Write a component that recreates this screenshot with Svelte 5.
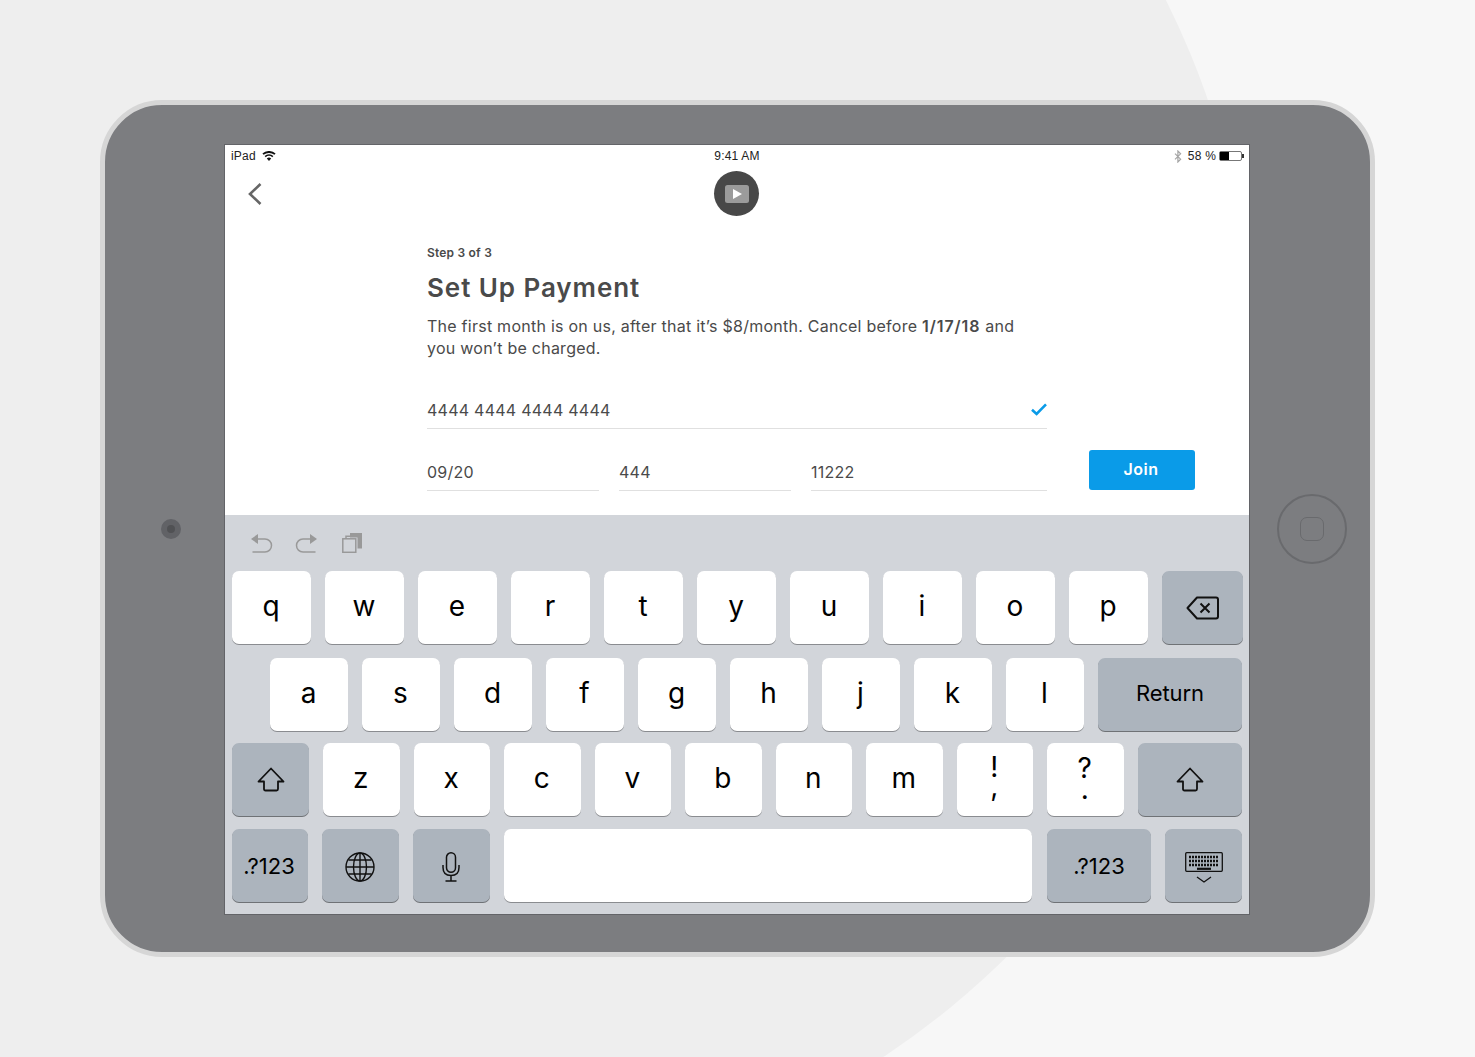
<script>
	const row1 = ['q', 'w', 'e', 'r', 't', 'y', 'u', 'i', 'o', 'p'];
	const row2 = ['a', 's', 'd', 'f', 'g', 'h', 'j', 'k', 'l'];
	const row3 = ['z', 'x', 'c', 'v', 'b', 'n', 'm'];
</script>

{#snippet shift()}
	<svg width="28" height="25" viewBox="0 0 28 25" fill="none" stroke="#111" stroke-width="1.8" stroke-linejoin="round">
		<path d="M14 1.5 L26.5 14.5 H21 V22 Q21 23.5 19.5 23.5 H8.5 Q7 23.5 7 22 V14.5 H1.5 Z" />
	</svg>
{/snippet}

<div class="page">
	<div class="blob"></div>
	<div class="device">
		<div class="side left">
			<div class="camera"><span></span></div>
		</div>

		<div class="screen">
			<div class="app">
				<div class="status">
					<div class="status-left">
						iPad
						<svg width="14" height="10" viewBox="0 0 14 10">
							<path d="M7 10 L4.8 7.4 A3.4 3.4 0 0 1 9.2 7.4 Z M3.7 6.2 L2.6 4.9 A6.8 6.8 0 0 1 11.4 4.9 L10.3 6.2 A5.2 5.2 0 0 0 3.7 6.2 Z M1.6 3.8 L.4 2.4 A10.2 10.2 0 0 1 13.6 2.4 L12.4 3.8 A8.6 8.6 0 0 0 1.6 3.8 Z" fill="#111" />
						</svg>
					</div>
					<div class="status-mid">9:41 AM</div>
					<div class="status-right">
						<svg width="8" height="13" viewBox="0 0 8 13" fill="none" stroke="#a5a5a5" stroke-width="1.2">
							<path d="M1 3.6 L6.6 9.2 L3.9 12 V1 L6.6 3.8 L1 9.4" />
						</svg>
						<span>58 %</span>
						<div class="battery"><i></i></div>
					</div>
				</div>

				<div class="header">
					<svg class="back" width="14" height="22" viewBox="0 0 14 22" fill="none" stroke="#666" stroke-width="2.6">
						<path d="M12.5 1 L2 11 L12.5 21" />
					</svg>
					<div class="logo">
						<div class="logo-box"><i></i></div>
					</div>
				</div>

				<div class="content">
					<div class="step">Step 3 of 3</div>
					<h1>Set Up Payment</h1>
					<p>The first month is on us, after that it’s $8/month. Cancel before <b>1/17/18</b> and<br />you won’t be charged.</p>

					<div class="field card">
						<span>4444 4444 4444 4444</span>
						<svg width="16" height="13" viewBox="0 0 16 13" fill="none" stroke="#0a9be8" stroke-width="2.6">
							<path d="M1 6.8 L5.6 11 L15 1.4" />
						</svg>
					</div>

					<div class="form-row">
						<div class="field small">09/20</div>
						<div class="field small">444</div>
						<div class="field small zip">11222</div>
						<button class="join">Join</button>
					</div>
				</div>
			</div>

			<div class="keyboard">
				<div class="tools">
					<svg width="22" height="20" viewBox="0 0 22 20" fill="none" stroke="#999" stroke-width="1.5">
						<path d="M5 6 H14 A6.5 6.5 0 0 1 14 19 H1.5" />
						<path d="M0 6 L7 1 V11 Z" fill="#999" stroke="none" />
					</svg>
					<svg width="22" height="20" viewBox="0 0 22 20" fill="none" stroke="#999" stroke-width="1.5">
						<path d="M17 6 H8 A6.5 6.5 0 0 0 8 19 H20.5" />
						<path d="M22 6 L15 1 V11 Z" fill="#999" stroke="none" />
					</svg>
					<svg class="paste" width="20" height="20" viewBox="0 0 20 20" fill="none" stroke="#999" stroke-width="1.5">
						<rect x=".8" y="5.8" width="13" height="13.5" />
						<path d="M4 5.5 V3.2 H8" />
						<path d="M8 0 H20 V15.5 H15.5 V4.5 H8 Z" fill="#999" stroke="none" />
					</svg>
				</div>

				<div class="row r1">
					{#each row1 as k}
						<div class="key">{k}</div>
					{/each}
					<div class="key dark backspace">
						<svg width="34" height="24" viewBox="0 0 34 24" fill="none" stroke="#111" stroke-width="2" stroke-linejoin="round">
							<path d="M11 1.5 H30 Q32 1.5 32 3.5 V20.5 Q32 22.5 30 22.5 H11 L1.5 12 Z" />
							<path d="M14.5 7.5 L23.5 16.5 M23.5 7.5 L14.5 16.5" />
						</svg>
					</div>
				</div>

				<div class="row r2">
					{#each row2 as k}
						<div class="key">{k}</div>
					{/each}
					<div class="key dark return">Return</div>
				</div>

				<div class="row r3">
					<div class="key dark shift-l">{@render shift()}</div>
					{#each row3 as k}
						<div class="key">{k}</div>
					{/each}
					<div class="key double comma"><span>!</span><span>,</span></div>
					<div class="key double"><span>?</span><span>.</span></div>
					<div class="key dark shift-r">{@render shift()}</div>
				</div>

				<div class="row r4">
					<div class="key dark label first w76">.?123</div>
					<div class="key dark nudge w77">
						<svg width="30" height="30" viewBox="0 0 30 30" fill="none" stroke="#111" stroke-width="1.4">
							<circle cx="15" cy="15" r="14" />
							<ellipse cx="15" cy="15" rx="6.5" ry="14" />
							<path d="M15 1 V29 M1 15 H29 M3.4 8 H26.6 M3.4 22 H26.6" />
						</svg>
					</div>
					<div class="key dark nudge w77">
						<svg width="18" height="30" viewBox="0 0 18 30" fill="none" stroke="#111" stroke-width="1.5">
							<rect x="4.5" y=".8" width="9" height="19.5" rx="4.5" />
							<path d="M1 13 V15.5 Q1 23.5 9 23.5 Q17 23.5 17 15.5 V13 M9 23.5 V29 M3.5 29 H14.5" />
						</svg>
					</div>
					<div class="key space"></div>
					<div class="key dark label w104">.?123</div>
					<div class="key dark kbd w77">
						<svg width="38" height="32" viewBox="0 0 38 32" fill="none" stroke="#111">
							<rect x=".7" y=".7" width="36.6" height="18.6" rx="1" stroke-width="1.3" />
							<path d="M4 5 H34 M4 9 H34 M4 13 H34" stroke-width="2.4" stroke-dasharray="2 1" />
							<path d="M12 16.8 H26" stroke-width="2.2" />
							<path d="M12 25 L19 30 L26 25" stroke-width="1.3" />
						</svg>
					</div>
				</div>
			</div>
		</div>

		<div class="side right">
			<div class="home"><span></span></div>
		</div>
	</div>
</div>

<style>
	:global(body) {
		background: #f7f7f7;
		font-family: Inter, 'Liberation Sans', sans-serif;
	}

	.page {
		position: relative;
		height: 1057px;
		padding: 100px;
		box-sizing: border-box;
		overflow: hidden;
	}

	.blob {
		position: absolute;
		left: -397px;
		top: -456px;
		width: 1650px;
		height: 1650px;
		border-radius: 50%;
		background: #eee;
	}

	.device {
		position: relative;
		display: flex;
		height: 857px;
		box-sizing: border-box;
		border: 5px solid #d6d6d6;
		border-radius: 62px;
		background: #7c7d80;
	}

	.side {
		display: flex;
		align-items: center;
		box-sizing: border-box;
	}

	.left {
		flex: 0 0 120px;
		padding-left: 56px;
	}

	.right {
		flex: 0 0 121px;
		padding-left: 28px;
	}

	.camera {
		width: 20px;
		height: 20px;
		border-radius: 50%;
		background: #616266;
		display: flex;
		align-items: center;
		justify-content: center;
	}

	.camera span {
		width: 8px;
		height: 8px;
		border-radius: 50%;
		background: #505154;
	}

	.home {
		width: 70px;
		height: 70px;
		box-sizing: border-box;
		border: 2px solid #696a6d;
		border-radius: 50%;
		display: flex;
		align-items: center;
		justify-content: center;
	}

	.home span {
		width: 24px;
		height: 24px;
		box-sizing: border-box;
		border: 1.5px solid #696a6d;
		border-radius: 7px;
	}

	.screen {
		flex: 1;
		margin: 40px 0 38px;
		display: flex;
		flex-direction: column;
		background: #fff;
		box-shadow: 0 0 0 1px #636468;
	}

	.app {
		height: 370px;
		color: #4a4a4a;
	}

	.status {
		display: grid;
		grid-template-columns: 1fr auto 1fr;
		align-items: center;
		height: 22px;
		padding: 0 6px;
		font-family: 'Liberation Sans', sans-serif;
		font-size: 12px;
		letter-spacing: 0.2px;
		color: #222;
	}

	.status-left {
		display: flex;
		align-items: center;
		gap: 6px;
	}

	.status-right {
		display: flex;
		justify-content: flex-end;
		align-items: center;
		gap: 4px;
	}

	.status-right span {
		margin: 0 -1px 0 2px;
	}

	.battery {
		position: relative;
		width: 23px;
		height: 10px;
		box-sizing: border-box;
		border: 1px solid #777;
		border-radius: 2px;
		margin-right: 1px;
	}

	.battery i {
		display: block;
		width: 9px;
		height: 8px;
		background: #000;
	}

	.battery::after {
		content: '';
		position: absolute;
		right: -3px;
		top: 2px;
		width: 2px;
		height: 4px;
		background: #333;
	}

	.header {
		position: relative;
		display: flex;
		justify-content: center;
		height: 49px;
		padding: 4px 1px 0 0;
		box-sizing: border-box;
	}

	.back {
		position: absolute;
		left: 23px;
		top: 16px;
	}

	.logo {
		width: 45px;
		height: 45px;
		border-radius: 50%;
		background: #484848;
		display: flex;
		align-items: center;
		justify-content: center;
	}

	.logo-box {
		width: 24px;
		height: 18px;
		border-radius: 2.5px;
		background: #9b9b9b;
		display: flex;
		align-items: center;
		justify-content: center;
	}

	.logo-box i {
		width: 0;
		height: 0;
		margin-left: 2px;
		border-left: 9px solid #fff;
		border-top: 5px solid transparent;
		border-bottom: 5px solid transparent;
	}

	.content {
		padding: 29px 0 0 202px;
	}

	.step {
		font-size: 12px;
		line-height: 16px;
		font-weight: 600;
		letter-spacing: 0.2px;
	}

	h1 {
		margin: 10px 0 0;
		font-size: 26px;
		line-height: 34px;
		font-weight: 600;
		letter-spacing: 0.93px;
	}

	p {
		margin: 10px 0 0;
		font-size: 16px;
		line-height: 22px;
		letter-spacing: 0.25px;
	}

	p b {
		font-weight: 600;
		letter-spacing: 0.95px;
	}

	.field {
		font-size: 16px;
		letter-spacing: 0.25px;
		line-height: 22px;
		border-bottom: 1px solid #e0e0e0;
		padding-bottom: 7px;
	}

	.card {
		width: 620px;
		margin-top: 40px;
		display: flex;
		justify-content: space-between;
		align-items: center;
	}

	.card svg {
		margin-bottom: 2px;
	}

	.form-row {
		display: flex;
		align-items: flex-end;
		gap: 20px;
		margin-top: 21px;
	}

	.small {
		width: 172px;
	}

	.zip {
		width: 236px;
	}

	.join {
		width: 106px;
		height: 40px;
		margin-left: 22px;
		margin-bottom: 1px;
		border: none;
		border-radius: 3px;
		background: #0a9be8;
		color: #fff;
		font-family: inherit;
		font-size: 16px;
		font-weight: 600;
		letter-spacing: 0.5px;
		padding: 0 2px 2px 0;
	}

	.keyboard {
		flex: 1;
		background: #d2d5da;
		padding: 0 6px 0 7px;
	}

	.tools {
		display: flex;
		align-items: center;
		gap: 22px;
		height: 56px;
		padding-left: 19px;
	}

	.paste {
		margin-left: 3px;
	}

	.row {
		display: flex;
		gap: 14px;
	}

	.r2 {
		margin: 14px 1px 0 0;
		padding-left: 38px;
	}

	.r3 {
		margin: 12px 1px 0 0;
	}

	.r4 {
		margin-top: 13px;
	}

	.key {
		flex: 1 1 0;
		height: 73px;
		box-sizing: border-box;
		display: flex;
		align-items: center;
		justify-content: center;
		border-radius: 7px;
		background: #fff;
		box-shadow: 0 1px 0 #8a8c90;
		font-size: 28px;
		color: #000;
		padding: 0 1px 4px 0;
	}

	.dark {
		background: #acb4bd;
		box-shadow: 0 1px 0 #6f7276;
		padding: 0;
	}

	.r4 .key {
		padding-top: 2px;
	}

	.r4 .space {
		padding: 0;
	}

	.r4 .kbd {
		padding-top: 4px;
	}

	.nudge {
		padding-right: 1px;
	}

	.backspace {
		flex: 0 0 81px;
	}

	.return {
		flex: 0 0 144px;
		font-size: 22px;
		letter-spacing: -0.1px;
		padding-bottom: 3px;
	}

	.shift-l {
		flex: 0 0 77px;
	}

	.shift-r {
		flex: 0 0 104.5px;
		padding-left: 1px;
	}

	.double {
		flex-direction: column;
		padding-bottom: 2px;
	}

	.double span {
		height: 21px;
		line-height: 21px;
	}

	.comma {
		padding-bottom: 7px;
	}

	.comma span:last-child {
		height: 17px;
		line-height: 17px;
	}

	.label {
		font-size: 22px;
		padding-bottom: 1px;
	}

	.first {
		padding-right: 2px;
	}

	.w76 {
		flex: 0 0 76px;
	}

	.w77 {
		flex: 0 0 77px;
	}

	.w104 {
		flex: 0 0 104px;
	}

	.space {
		flex: 0 0 528px;
		margin-right: 1px;
	}
</style>
